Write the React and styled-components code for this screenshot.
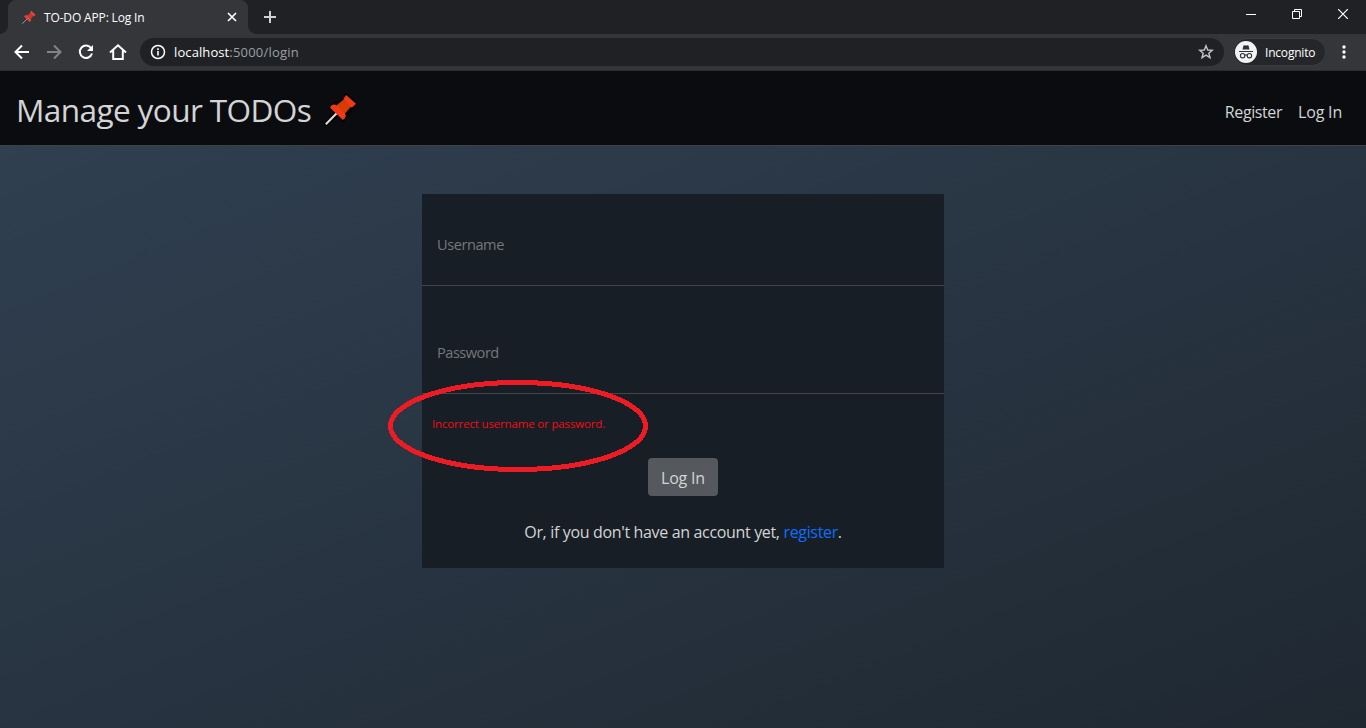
import React from "react";
import styled, { createGlobalStyle } from "styled-components";

const GlobalStyle = createGlobalStyle`
  * { box-sizing: border-box; }
  html, body { margin: 0; height: 100%; overflow: hidden; }
  body { font-family: "Open Sans", "Noto Sans", sans-serif; color: #d3d4d5; }
  #root { height: 100%; }
  svg { display: block; flex: none; }
`;

const Window = styled.div`
  height: 728px;
  width: 1366px;
  display: flex;
  flex-direction: column;
`;

const Label = styled.span`
  white-space: nowrap;
  letter-spacing: ${(p) => p.$track || 0}px;
`;

const TabStrip = styled.header`
  height: 34px;
  flex: none;
  background: #202124;
  display: flex;
  align-items: flex-start;
`;

const CurveLeft = styled.div`
  width: 8px;
  height: 34px;
  background: radial-gradient(circle at 0 0, #202124 7.5px, #35363a 8px) no-repeat 0 26px / 8px 8px;
`;

const CurveRight = styled(CurveLeft)`
  background: radial-gradient(circle at 100% 0, #202124 7.5px, #35363a 8px) no-repeat 0 26px / 8px 8px;
`;

const Tab = styled.div`
  width: 240px;
  height: 34px;
  padding: 0 11px 0 13px;
  border-radius: 8px 8px 0 0;
  background: #35363a;
  color: #fff;
  font-size: 12px;
  display: flex;
  align-items: center;
`;

const TabTitle = styled(Label)`
  flex: 1;
  margin-left: 8px;
`;

const NewTab = styled.div`
  padding: 11px 0 0 8px;
`;

const WindowButtons = styled.div`
  margin-left: auto;
  display: flex;
  height: 28px;
`;

const WindowButton = styled.div`
  width: 46px;
  display: flex;
  align-items: center;
  justify-content: center;
`;

const Toolbar = styled.div`
  height: 37px;
  flex: none;
  background: #35363a;
  border-bottom: 1px solid #2a2b2e;
  display: flex;
  align-items: center;
  padding: 0 14px 0 13px;
`;

const NavButtons = styled.div`
  display: flex;
  gap: 14px;
  margin-right: 13px;
`;

const AddressBar = styled.div`
  width: 1084px;
  height: 28px;
  border-radius: 14px;
  background: #202124;
  padding: 0 10px 0 10px;
  display: flex;
  align-items: center;
  font-size: 13px;
`;

const Host = styled(Label)`
  color: #fff;
  margin-left: 8px;
`;

const UrlPath = styled(Label)`
  color: #9aa0a6;
  flex: 1;
`;

const Incognito = styled.div`
  margin-left: 9px;
  width: 93px;
  height: 28px;
  border-radius: 14px;
  background: #252629;
  border: 1px solid #3b3c40;
  display: flex;
  align-items: center;
  gap: 8px;
  padding-left: 1px;
  color: #fff;
  font-size: 12px;
`;

const MenuSlot = styled.div`
  margin-left: auto;
`;

const Page = styled.div`
  flex: 1;
  display: flex;
  flex-direction: column;
  align-items: center;
  background: linear-gradient(158deg, #314153 0%, #1f2831 100%);
`;

const Navbar = styled.nav`
  width: 100%;
  height: 75px;
  background: #0b0c0f;
  border-bottom: 1px solid #3f4144;
  display: flex;
  align-items: center;
  padding: 3px 24px 0 16px;
`;

const Brand = styled.div`
  display: flex;
  align-items: center;
  font-size: 31.6px;
  line-height: 44px;
`;

const BrandPin = styled.span`
  margin: 1px 0 0 12px;
`;

const NavLinks = styled.div`
  margin-left: auto;
  display: flex;
  gap: 16px;
  padding-top: 5px;
  font-size: 16px;
`;

const Card = styled.main`
  position: relative;
  width: 522px;
  height: 374px;
  margin-top: 48px;
  background: #181e25;
  display: flex;
  flex-direction: column;
  align-items: center;
`;

const Field = styled.div`
  width: 100%;
  height: ${(p) => p.$height}px;
  border-bottom: 1px solid #43464a;
  padding: 0 15px 29px;
  display: flex;
  align-items: flex-end;
  font-size: 14.6px;
  line-height: 24px;
  color: #74787c;
`;

const ErrorMessage = styled.div`
  align-self: flex-start;
  margin: 20px 0 0 10px;
  height: 20px;
  line-height: 20px;
  font-size: 11.5px;
  font-weight: 500;
  color: #f20c14;
`;

const SubmitButton = styled.button`
  margin-top: 24px;
  width: 70px;
  height: 38px;
  padding: 1px 0 0;
  border: 0;
  border-radius: 4px;
  background: #55585c;
  color: #d3d4d5;
  font: inherit;
  font-size: 16px;
`;

const RegisterLine = styled.p`
  margin: 24px 0 0;
  font-size: 16px;
  line-height: 24px;
`;

const RegisterLink = styled.span`
  color: #0d6efd;
`;

const Marker = styled.svg`
  position: absolute;
  left: -35px;
  top: 185px;
`;

function Pushpin({ size, outline }) {
  return (
    <svg width={size} height={size} viewBox="0 0 36 36">
      {outline && (
        <path d="M3 33 14 22 8 15.500 13.500 12 22.500 7 24.500 2 35 11.500 30.500 15.500 25 22 21 28.500 15 23Z" fill="#000" stroke="#000" strokeWidth="4" strokeLinejoin="round" />
      )}
      <path d="M3 33 15 21" stroke={outline ? "#ddd" : "#9ba3a8"} strokeWidth="2.2" />
      <path d="M13 14 22 7 30 14 22 23Z" fill={outline ? "#d83b01" : "#c9362c"} />
      <path d="M7.500 15.500Q9 11.500 13.500 12.500L23.500 22Q25.500 25.500 21 28.500Z" fill={outline ? "#f03a17" : "#e0483c"} />
      <path d="M21.500 6.500 24.500 2 35 11.500 30.500 15.500Z" fill={outline ? "#f03a17" : "#e0483c"} />
    </svg>
  );
}

function Glyph({ size = 18, color = "#fff", width = 2, children }) {
  return (
    <svg width={size} height={size} viewBox={`0 0 ${size} ${size}`} fill="none" stroke={color} strokeWidth={width}>
      {children}
    </svg>
  );
}

export default function App() {
  return (
    <>
      <GlobalStyle />
      <Window>
        <TabStrip>
          <CurveLeft />
          <Tab>
            <Pushpin size={15} />
            <TabTitle $track={-0.15}>TO-DO APP: Log In</TabTitle>
            <Glyph size={10}><path d="M1 1 9 9M9 1 1 9" strokeWidth="1.7" /></Glyph>
          </Tab>
          <CurveRight />
          <NewTab>
            <Glyph size={12} color="#d0d1d3"><path d="M6 0V12M0 6H12" /></Glyph>
          </NewTab>
          <WindowButtons>
            <WindowButton><Glyph size={10} width={1}><path d="M0 5.500H10" /></Glyph></WindowButton>
            <WindowButton>
              <Glyph size={10} width={1}><path d="M.5 2.500H7.500V9.500H.5ZM2.500 2.500V.5H9.500V7.500H7.500" /></Glyph>
            </WindowButton>
            <WindowButton><Glyph size={10} width={1.2}><path d="M0 0 10 10M10 0 0 10" /></Glyph></WindowButton>
          </WindowButtons>
        </TabStrip>
        <Toolbar>
          <NavButtons>
            <Glyph><path d="M16 9H3M9 2.500 2.500 9 9 15.500" /></Glyph>
            <Glyph color="#828387"><path d="M2 9H15M9 2.500 15.500 9 9 15.500" /></Glyph>
            <Glyph>
              <path d="M14.200 5.200A6.200 6.200 0 1 0 15 10.500" />
              <path d="M16 2V8H10Z" fill="#fff" stroke="none" />
            </Glyph>
            <Glyph><path d="M1 9.500 9 2.300 17 9.500M4.200 7.500V16H13.800V7.500" /></Glyph>
          </NavButtons>
          <AddressBar>
            <Glyph size={16} width={1.5}>
              <circle cx="8" cy="8" r="6.500" />
              <path d="M8 7V11.500M8 4.300V5.900" strokeWidth="1.6" />
            </Glyph>
            <Host $track={0.1}>localhost</Host>
            <UrlPath $track={0.2}>:5000/login</UrlPath>
            <Glyph size={16} color="#c3c4c6" width={1.4}>
              <path d="M8 1.800 9.700 6 14.300 6.300 10.800 9.200 12 13.700 8 11.200 4 13.700 5.200 9.200 1.700 6.300 6.300 6Z" />
            </Glyph>
          </AddressBar>
          <Incognito>
            <Glyph size={22} color="#303134" width={1.1}>
              <circle cx="11" cy="11" r="11" fill="#f1f3f4" stroke="none" />
              <path d="M7.500 8.500 8.500 4.500 10 4.200 11 4.700 12 4.200 13.500 4.500 14.500 8.500Z" fill="#303134" stroke="none" />
              <path d="M4 10.500H18M9.800 14.200Q11 13.400 12.200 14.200" />
              <circle cx="7.600" cy="14.700" r="2.200" />
              <circle cx="14.400" cy="14.700" r="2.200" />
            </Glyph>
            <Label $track={-0.2}>Incognito</Label>
          </Incognito>
          <MenuSlot>
            <svg width="16" height="16" fill="#fff">
              <circle cx="8" cy="3" r="1.700" /><circle cx="8" cy="8" r="1.700" /><circle cx="8" cy="13" r="1.700" />
            </svg>
          </MenuSlot>
        </Toolbar>
        <Page>
          <Navbar>
            <Brand>
              <Label $track={-0.63}>Manage your TODOs</Label>
              <BrandPin><Pushpin size={34} outline /></BrandPin>
            </Brand>
            <NavLinks>
              <Label $track={-0.4}>Register</Label>
              <Label $track={-0.2}>Log In</Label>
            </NavLinks>
          </Navbar>
          <Card>
            <Field $height={92}><Label $track={-0.45}>Username</Label></Field>
            <Field $height={108}><Label $track={-0.5}>Password</Label></Field>
            <ErrorMessage><Label $track={-0.16}>Incorrect username or password.</Label></ErrorMessage>
            <SubmitButton type="button"><Label $track={-0.2}>Log In</Label></SubmitButton>
            <RegisterLine>
              <Label $track={-0.34}>Or, if you don't have an account yet, <RegisterLink>register</RegisterLink>.</Label>
            </RegisterLine>
            <Marker width="262" height="94" fill="none" stroke="#ed1c24" strokeWidth="5" shapeRendering="crispEdges">
              <ellipse cx="131" cy="47" rx="127.500" ry="43.500" />
            </Marker>
          </Card>
        </Page>
      </Window>
    </>
  );
}
